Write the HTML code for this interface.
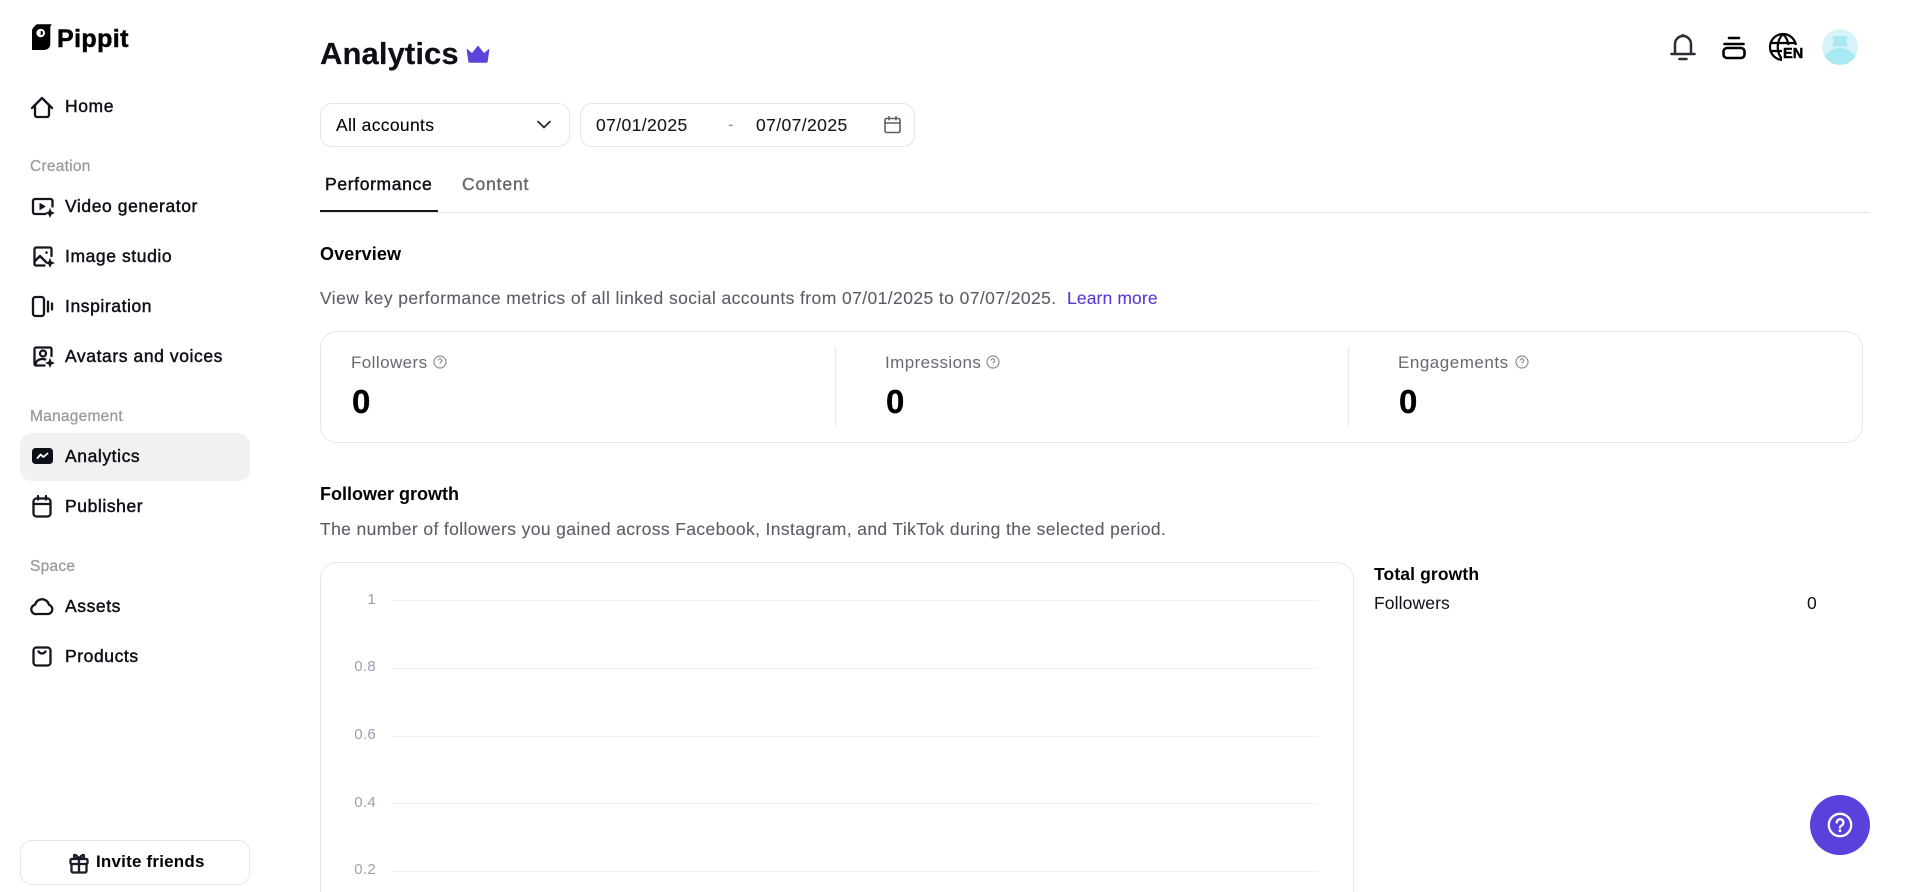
<!DOCTYPE html>
<html lang="en">
<head>
<meta charset="utf-8">
<title>Analytics - Pippit</title>
<style>
html,body{margin:0;padding:0;background:#fff;width:1908px;height:892px;overflow:hidden}
body{position:relative;font-family:"Liberation Sans",sans-serif;color:#0d0f17}
.t{position:absolute;white-space:nowrap;line-height:24px;height:24px}
.nav{left:65px;font-size:17.5px;letter-spacing:.58px;-webkit-text-stroke:.45px #0d0f17;color:#0d0f17}
.sec{left:30px;font-size:15.5px;letter-spacing:.25px;color:#9b9b9f;-webkit-text-stroke:.3px #9b9b9f}
.ic{position:absolute;overflow:visible;fill:none;stroke:#14161f;stroke-width:2.3;stroke-linecap:round;stroke-linejoin:round}
.star{fill:#14161f;stroke-width:.5}
.box{position:absolute;box-sizing:border-box;border:1px solid #e6e6e8;background:#fff}
.d{font-size:17.5px;color:#14161f;-webkit-text-stroke:.1px #14161f}
.sub{font-size:17.5px;color:#5a5d66;-webkit-text-stroke:.1px #5a5d66}
.h{font-size:18px;font-weight:700;color:#000}
.lab{font-size:17px;color:#676a72;letter-spacing:.42px}
.num{font-size:33px;font-weight:700;color:#000;line-height:36px;height:36px;-webkit-text-stroke:.3px #000}
.div{position:absolute;width:1px;top:347px;height:80px;background:#e9e9eb}
.g{position:absolute;left:392px;width:927px;height:1px;background:#f2f2f3}
.y{position:absolute;width:50px;left:326px;text-align:right;font-size:15px;line-height:20px;color:#9a9fb0;letter-spacing:.3px}
.q{position:absolute;overflow:visible;fill:none;stroke:#8b8d93;stroke-width:1.2}
</style>
</head>
<body>

<!-- Sidebar -->
<svg style="position:absolute;left:32px;top:24px" width="20" height="26" viewBox="0 0 20 26"><path d="M3 2C3.500.8 4.500.3 6 .3H20c-1.200 1-1.700 2-1.700 3.500v15.700c0 4-2.500 6.500-6.500 6.500H0V7C0 4.500 1.800 3 3 2Z" fill="#000"/><circle cx="8.700" cy="9" r="4.300" fill="#fff"/><path d="M8.700 6.700a2.300 2.300 0 0 1 0 4.600Z" fill="#000"/></svg>
<div class="t" style="left:57px;top:27px;font-size:25px;font-weight:700;letter-spacing:.4px;-webkit-text-stroke:.5px #000;color:#000">Pippit</div>

<svg class="ic" style="left:30px;top:95px" width="24" height="24" viewBox="0 0 24 24"><path d="M2 13 12 3l10 10M5 10.500V20a2 2 0 0 0 2 2h10a2 2 0 0 0 2-2v-9.500"/></svg>
<div class="t nav" style="top:94px">Home</div>

<div class="t sec" style="top:155px">Creation</div>

<svg class="ic" style="left:30px;top:194px" width="24" height="24" viewBox="0 0 24 24"><path d="M22.500 12.500V7a2 2 0 0 0-2-2H5a2 2 0 0 0-2 2v11a2 2 0 0 0 2 2h10.500"/><path d="M10 9.500v6l5-3Z" fill="#14161f" style="stroke-width:1"/><path class="star" d="M20 14.500 21.300 17.700 24.500 19 21.300 20.300 20 23.500 18.700 20.300 15.500 19 18.700 17.700Z"/></svg>
<div class="t nav" style="top:194px">Video generator</div>

<svg class="ic" style="left:30px;top:244px" width="24" height="24" viewBox="0 0 24 24"><path d="M21.500 12V5a1.500 1.500 0 0 0-1.500-1.500H6A1.500 1.500 0 0 0 4.500 5v15A1.500 1.500 0 0 0 6 21.500h8.500"/><path d="m5 17 5-5 6 6"/><circle cx="16.500" cy="8.500" r="1.300" fill="#14161f" stroke="none"/><path class="star" d="M20 14.500 21.300 17.700 24.500 19 21.300 20.300 20 23.500 18.700 20.300 15.500 19 18.700 17.700Z"/></svg>
<div class="t nav" style="top:244px">Image studio</div>

<svg class="ic" style="left:30px;top:294px" width="24" height="24" viewBox="0 0 24 24"><rect x="3" y="3" width="11" height="19" rx="2.500"/><path d="M18 7.500v10M22 9.500v6"/></svg>
<div class="t nav" style="top:294px">Inspiration</div>

<svg class="ic" style="left:30px;top:344px" width="24" height="24" viewBox="0 0 24 24"><path d="M21.500 12V5a1.500 1.500 0 0 0-1.500-1.500H6A1.500 1.500 0 0 0 4.500 5v15A1.500 1.500 0 0 0 6 21.500h8.500"/><circle cx="13" cy="9.500" r="3"/><path d="M5.500 20c1-3.500 3.500-5 7-5 1 0 2 .2 2.800.5"/><path class="star" d="M20 14.500 21.300 17.700 24.500 19 21.300 20.300 20 23.500 18.700 20.300 15.500 19 18.700 17.700Z"/></svg>
<div class="t nav" style="top:344px">Avatars and voices</div>

<div class="t sec" style="top:404.500px">Management</div>

<div style="position:absolute;left:20px;top:433px;width:230px;height:48px;border-radius:12px;background:#f1f1f2"></div>
<svg style="position:absolute;left:32px;top:448px" width="21" height="16" viewBox="0 0 21 16"><rect width="21" height="16" rx="3.500" fill="#0d0f17"/><path d="m5.500 10 3-3.500 3 2.500 4-3.500" fill="none" stroke="#fff" stroke-width="1.800" stroke-linecap="round" stroke-linejoin="round"/></svg>
<div class="t nav" style="top:444px">Analytics</div>

<svg class="ic" style="left:30px;top:494px" width="24" height="24" viewBox="0 0 24 24"><rect x="3.500" y="4.500" width="17" height="18" rx="3"/><path d="M3.500 10h17M8 2v3.500M16 2v3.500"/></svg>
<div class="t nav" style="top:494px">Publisher</div>

<div class="t sec" style="top:555px">Space</div>

<svg class="ic" style="left:30px;top:594px" width="24" height="24" viewBox="0 0 24 24"><path d="M7 20h10.500a4.700 4.700 0 0 0 1.500-9.200 7.200 7.200 0 0 0-14 0A4.700 4.700 0 0 0 7 20Z"/></svg>
<div class="t nav" style="top:594px">Assets</div>

<svg class="ic" style="left:30px;top:644px" width="24" height="24" viewBox="0 0 24 24"><rect x="3.500" y="3.500" width="17" height="18" rx="3"/><path d="M8.500 7.500c1 1.500 2 2 3.500 2s2.500-.5 3.500-2"/></svg>
<div class="t nav" style="top:644px">Products</div>

<div class="box" style="left:20px;top:840px;width:230px;height:45px;border-radius:12px"></div>
<svg class="ic" style="left:67px;top:851px;stroke:#1a1c26" width="24" height="24" viewBox="0 0 24 24"><rect x="3.500" y="8" width="17" height="5" rx="1"/><path d="M4.500 13v7a1.500 1.500 0 0 0 1.500 1.500h12a1.500 1.500 0 0 0 1.500-1.500v-7M12 8v13.500M12 8C10 4 6.500 2.500 7 5.500 7.300 7.500 10 8 12 8Zm0 0c2-4 5.500-5.500 5-2.500-.3 2-3 2.500-5 2.500Z"/></svg>
<div class="t" style="left:96px;top:850px;font-size:17px;font-weight:700;letter-spacing:.2px;color:#000">Invite friends</div>

<!-- Header -->
<div class="t" style="left:320px;top:36px;height:36px;line-height:36px;font-size:31px;font-weight:700;letter-spacing:.1px;color:#0d0f17;-webkit-text-stroke:.2px #0d0f17">Analytics</div>
<svg style="position:absolute;left:466px;top:45px" width="24" height="18" viewBox="0 0 24 18"><path d="M.5 3.500 6 8 12 .5 18 8l5.500-4.500-1.800 13a1.500 1.500 0 0 1-1.500 1.300H3.800a1.500 1.500 0 0 1-1.500-1.300Z" fill="#5b44d8"/></svg>

<svg class="ic" style="left:1670px;top:32px;stroke:#2c2d36;stroke-width:2.500" width="26" height="30" viewBox="0 0 26 30"><path d="M5 21.500V12a8 8 0 0 1 16 0v9.500M1.500 22h23M9.500 27h7M12 3.500h2"/></svg>
<svg class="ic" style="left:1721px;top:36px;stroke:#000;stroke-width:2.600" width="26" height="24" viewBox="0 0 26 24"><path d="M8 2h10M3.500 8h19"/><rect x="2.500" y="12" width="21" height="10" rx="3.500"/></svg>
<svg class="ic" style="left:1769px;top:33px;stroke:#000;stroke-width:2.200" width="28" height="28" viewBox="0 0 28 28"><path d="M14 27A13 13 0 1 1 27 14M1.500 10h25M1.500 18h12M14 1c-7 7-7 19 0 26M14 1c3.500 3.500 5 7 5.500 11"/></svg>
<div class="t" style="left:1782px;top:45px;font-size:14.500px;font-weight:700;letter-spacing:.1px;color:#000;-webkit-text-stroke:.5px #000;background:#fff;padding-left:1px;line-height:18px;height:18px">EN</div>
<svg style="position:absolute;left:1822px;top:29px" width="36" height="36" viewBox="0 0 36 36"><defs><clipPath id="av"><circle cx="18" cy="18" r="18"/></clipPath></defs><circle cx="18" cy="18" r="18" fill="#d6f4f8"/><path d="M11.500 7h13a1 1 0 0 1 1 1l-.8 4 .8 4a1 1 0 0 1-1 1.500h-13a1 1 0 0 1-1-1.500l.8-4-.8-4a1 1 0 0 1 1-1Z" fill="#a9e9f3"/><ellipse cx="18" cy="33" rx="16.500" ry="14" fill="#a9e9f3" clip-path="url(#av)"/></svg>

<!-- Filters -->
<div class="box" style="left:320px;top:103px;width:250px;height:44px;border-radius:12px"></div>
<div class="t d" style="left:336px;top:113px;letter-spacing:.33px;color:#000">All accounts</div>
<svg class="ic" style="left:536px;top:117px;stroke:#24262e;stroke-width:1.700" width="16" height="16" viewBox="0 0 16 16"><path d="m2 4.500 6 6 6-6"/></svg>
<div class="box" style="left:580px;top:103px;width:335px;height:44px;border-radius:12px"></div>
<div class="t d" style="left:596px;top:113px;letter-spacing:.4px">07/01/2025</div>
<div class="t" style="left:728px;top:113px;font-size:17px;color:#8d939c">-</div>
<div class="t d" style="left:756px;top:113px;letter-spacing:.4px">07/07/2025</div>
<svg class="ic" style="left:884px;top:116px;stroke:#59606b;stroke-width:1.600" width="17" height="18" viewBox="0 0 17 18"><rect x="1" y="2.500" width="15" height="14" rx="1.500"/><path d="M1 7h15M5 .7v3M12 .7v3"/></svg>

<!-- Tabs -->
<div class="t" style="left:325px;top:172px;font-size:17.500px;letter-spacing:.65px;color:#0d0f17;-webkit-text-stroke:.45px #0d0f17">Performance</div>
<div class="t" style="left:462px;top:172px;font-size:17.500px;letter-spacing:.85px;color:#66686f;-webkit-text-stroke:.4px #66686f">Content</div>
<div style="position:absolute;left:320px;top:212px;width:1550px;height:1px;background:#e4e4e6"></div>
<div style="position:absolute;left:320px;top:209.500px;width:118px;height:2.500px;background:#17181c"></div>

<!-- Overview -->
<div class="t h" style="left:320px;top:242px;letter-spacing:.14px">Overview</div>
<div class="t sub" style="left:320px;top:286px;letter-spacing:.41px">View key performance metrics of all linked social accounts from 07/01/2025 to 07/07/2025.</div>
<div class="t" style="left:1067px;top:286px;font-size:17.500px;letter-spacing:.12px;color:#5a37d6;-webkit-text-stroke:.1px #5a37d6">Learn more</div>

<div class="box" style="left:320px;top:331px;width:1543px;height:112px;border-radius:17px"></div>
<div class="t lab" style="left:351px;top:351px">Followers</div>
<svg class="q" style="left:433px;top:355px" width="14" height="14" viewBox="0 0 14 14"><circle cx="7" cy="7" r="6"/><path d="M5.200 5.500a1.800 1.800 0 1 1 2.800 1.500c-.7.400-1 .8-1 1.500M7 10v.6"/></svg>
<div class="t num" style="left:352px;top:384px">0</div>
<div class="div" style="left:835px"></div>
<div class="t lab" style="left:885px;top:351px">Impressions</div>
<svg class="q" style="left:986px;top:355px" width="14" height="14" viewBox="0 0 14 14"><circle cx="7" cy="7" r="6"/><path d="M5.200 5.500a1.800 1.800 0 1 1 2.800 1.500c-.7.400-1 .8-1 1.500M7 10v.6"/></svg>
<div class="t num" style="left:886px;top:384px">0</div>
<div class="div" style="left:1348px"></div>
<div class="t lab" style="left:1398px;top:351px;letter-spacing:.52px">Engagements</div>
<svg class="q" style="left:1515px;top:355px" width="14" height="14" viewBox="0 0 14 14"><circle cx="7" cy="7" r="6"/><path d="M5.200 5.500a1.800 1.800 0 1 1 2.800 1.500c-.7.400-1 .8-1 1.500M7 10v.6"/></svg>
<div class="t num" style="left:1399px;top:384px">0</div>

<!-- Follower growth -->
<div class="t h" style="left:320px;top:482px">Follower growth</div>
<div class="t sub" style="left:320px;top:517px;letter-spacing:.375px">The number of followers you gained across Facebook, Instagram, and TikTok during the selected period.</div>

<div class="box" style="left:320px;top:562px;width:1034px;height:330px;border-radius:17px 17px 0 0;border-bottom:none"></div>
<div class="y" style="top:590px">1</div><div class="g" style="top:600px"></div>
<div class="y" style="top:657px">0.8</div><div class="g" style="top:668px"></div>
<div class="y" style="top:725px">0.6</div><div class="g" style="top:736px"></div>
<div class="y" style="top:793px">0.4</div><div class="g" style="top:803px"></div>
<div class="y" style="top:860px">0.2</div><div class="g" style="top:871px"></div>

<div class="t" style="left:1374px;top:562px;font-size:17.500px;font-weight:700;color:#000;letter-spacing:.12px">Total growth</div>
<div class="t" style="left:1374px;top:591px;font-size:17.500px;color:#0d0f17;letter-spacing:.11px">Followers</div>
<div class="t" style="left:1807px;top:591px;font-size:17.500px;color:#0d0f17">0</div>

<!-- Help -->
<div style="position:absolute;left:1810px;top:795px;width:60px;height:60px;border-radius:50%;background:#5b41dc"></div>
<svg style="position:absolute;left:1826px;top:811px;overflow:visible;fill:none;stroke:#fff;stroke-width:2.300;stroke-linecap:round" width="28" height="28" viewBox="0 0 28 28"><circle cx="14" cy="14" r="11.200"/><path d="M10.800 11.500a3.300 3.300 0 1 1 5.200 2.700c-1.300.8-2 1.300-2 2.400"/><path d="M14 19.700v.2" stroke-width="2.600"/></svg>

</body>
</html>
